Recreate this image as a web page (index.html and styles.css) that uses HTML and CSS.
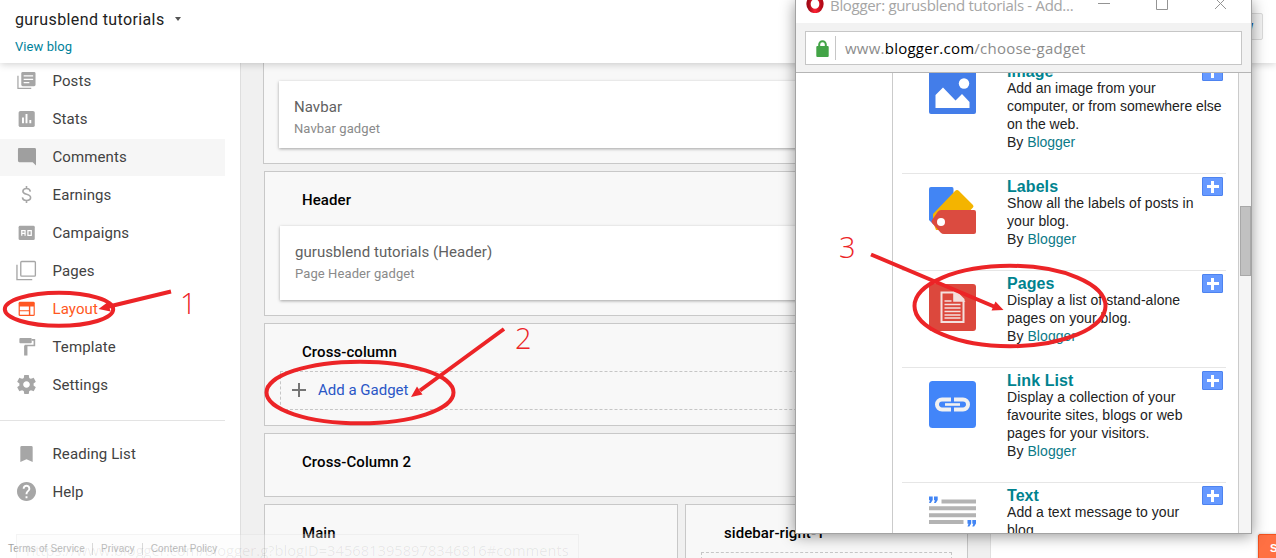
FILE: index.html
```html
<!DOCTYPE html>
<html lang="en">
<head>
<meta charset="utf-8">
<title>Blogger: Layout</title>
<link rel="stylesheet" href="styles.css">
</head>
<body>
<div class="page">
  <header class="topbar">
    <div class="blog-name"><span class="t-blog">gurusblend tutorials</span><i class="caret"></i></div>
    <a class="view-blog">View blog</a>
    <div class="preview-btn">Preview</div>
  </header>

  <div class="body">
    <nav class="sidebar">
      <ul class="menu">
        <li><svg viewBox="0 0 20 20"><path d="M1 5v13.2h14" fill="none" stroke="#a6a6a6" stroke-width="1.3"/><rect x="4.5" y="1" width="15" height="15" rx="1.5" fill="#a6a6a6"/><path d="M7 5.2h10M7 8.7h10M7 12.2h6" stroke="#fff" stroke-width="1.3"/></svg><span>Posts</span></li>
        <li><svg viewBox="0 0 20 20"><rect x="1.7" y="2" width="17" height="17" rx="2" fill="#a6a6a6"/><path d="M6.3 9v6M10 5.3V15M14 11.500v3.500" stroke="#fff" stroke-width="2"/></svg><span>Stats</span></li>
        <li class="hover"><svg viewBox="0 0 20 20"><path d="M2 1h16.500q1.500 0 1.500 1.500V19.500L16.500 16H2.500Q1 16 1 14.500V2.500Q1 1 2 1z" fill="#9f9f9f"/></svg><span>Comments</span></li>
        <li><svg viewBox="0 0 20 20"><path d="M10 1v2.500M10 16.500V19M14 7q-.4-3.300-4-3.300T6.200 6.600q0 2.300 3.900 3.200 4.200 1 4.200 3.700t-4.200 2.800q-4 0-4.400-3.300" fill="none" stroke="#a6a6a6" stroke-width="1.700"/></svg><span>Earnings</span></li>
        <li><svg viewBox="0 0 20 20"><rect x="1.700" y="3" width="17" height="15" rx="1.500" fill="#a6a6a6"/><path d="M5 13.500V8h3.500v5.500M5 11h3.500M11.500 8h3.500v5h-3.500z" fill="none" stroke="#fff" stroke-width="1.300"/></svg><span>Campaigns</span></li>
        <li><svg class="wide" viewBox="0 0 22 22"><path d="M1 5v15.500h16" fill="none" stroke="#a6a6a6" stroke-width="1.400"/><rect x="5" y="1.600" width="15.300" height="15.300" rx="1" fill="none" stroke="#a6a6a6" stroke-width="1.400"/></svg><span>Pages</span></li>
        <li class="active"><svg viewBox="0 0 20 20"><rect x="1.700" y="3" width="17" height="15" rx="1.500" fill="#ff5722"/><path d="M3 8h9.500v3.800H3zM3 13h9.500v3.700H3zM14 8h3.500v8.700H14z" fill="#fff"/></svg><span>Layout</span></li>
        <li><svg viewBox="0 0 20 20"><rect x="2.500" y="1" width="13" height="5.500" rx="1" fill="#a6a6a6"/><path d="M15.500 3H18.300V9H9v3" fill="none" stroke="#a6a6a6" stroke-width="1.700"/><rect x="7.500" y="9" width="3.500" height="10.500" fill="#a6a6a6"/></svg><span>Template</span></li>
        <li><svg viewBox="2 2 20 20"><path fill="#a6a6a6" d="M19.430 12.980c.04-.32.07-.64.07-.98s-.03-.66-.07-.98l2.110-1.650c.19-.15.24-.42.12-.64l-2-3.460c-.12-.22-.39-.3-.61-.22l-2.490 1c-.52-.4-1.080-.73-1.690-.98l-.38-2.650C14.460 2.180 14.250 2 14 2h-4c-.25 0-.46.18-.49.42l-.38 2.650c-.61.25-1.170.59-1.690.98l-2.490-1c-.23-.09-.49 0-.61.22l-2 3.460c-.13.22-.07.49.12.64l2.110 1.650c-.04.32-.07.65-.07.98s.03.66.07.98l-2.110 1.650c-.19.15-.24.42-.12.64l2 3.460c.12.22.39.3.61.22l2.490-1c.52.4 1.080.73 1.690.98l.38 2.650c.03.24.24.42.49.42h4c.25 0 .46-.18.49-.42l.38-2.650c.61-.25 1.170-.59 1.690-.98l2.490 1c.23.09.49 0 .61-.22l2-3.460c.12-.22.07-.49-.12-.64l-2.110-1.650zM12 15.500c-1.930 0-3.500-1.570-3.500-3.500s1.570-3.500 3.500-3.500 3.500 1.570 3.500 3.500-1.570 3.500-3.500 3.500z"/></svg><span>Settings</span></li>
      </ul>
      <ul class="menu second">
        <li><svg viewBox="0 0 20 20"><path d="M5 2h10q1.500 0 1.500 1.500V19L10 16l-6.500 3V3.500Q3.500 2 5 2z" fill="#a6a6a6"/></svg><span>Reading List</span></li>
        <li><svg viewBox="2 2 20 20"><path fill="#a6a6a6" d="M12 2C6.480 2 2 6.480 2 12s4.480 10 10 10 10-4.480 10-10S17.520 2 12 2zm1 17h-2v-2h2v2zm2.070-7.750l-.9.920C13.450 12.900 13 13.500 13 15h-2v-.5c0-1.100.45-2.100 1.170-2.830l1.240-1.260c.37-.36.59-.86.59-1.410 0-1.100-.9-2-2-2s-2 .9-2 2H8c0-2.210 1.790-4 4-4s4 1.790 4 4c0 .88-.36 1.680-.93 2.250z"/></svg><span>Help</span></li>
      </ul>
      <div class="legal"><span>Terms of Service</span><span>Privacy</span><span>Content Policy</span></div>
    </nav>

    <main class="canvas">
      <section class="section navbar-sec">
        <div class="card"><div class="card-title">Navbar</div><div class="card-sub">Navbar gadget</div></div>
      </section>
      <section class="section header-sec">
        <h3>Header</h3>
        <div class="card"><div class="card-title">gurusblend tutorials (Header)</div><div class="card-sub">Page Header gadget</div></div>
      </section>
      <section class="section cross-sec">
        <h3>Cross-column</h3>
        <div class="add"><svg viewBox="0 0 14 14"><path d="M7 0v14M0 7h14" stroke="#757575" stroke-width="2"/></svg><span>Add a Gadget</span></div>
      </section>
      <section class="section cross2-sec"><h3>Cross-Column 2</h3></section>
      <div class="columns">
        <section class="section main-sec"><h3>Main</h3></section>
        <section class="section right-sec"><h3>sidebar-right-1</h3><div class="add"></div></section>
      </div>
    </main>
  </div>
</div>

<div class="status">https://www.blogger.com/blogger.g?blogID=3456813958978346816#comments</div>
<div class="save-btn">Save</div>

<div class="window">
  <div class="titlebar">
    <svg class="opera" viewBox="0 0 18 18"><defs><linearGradient id="og" x2="1"><stop stop-color="#a30a17"/><stop offset=".5" stop-color="#ff2335"/><stop offset="1" stop-color="#b50a18"/></linearGradient></defs><ellipse cx="9" cy="9" rx="6.500" ry="7" fill="none" stroke="url(#og)" stroke-width="4.300"/></svg>
    <span class="win-title">Blogger: gurusblend tutorials - Add...</span>
    <svg class="controls" viewBox="0 0 132 14"><path d="M0 6.500h12M58.500.5h11v12h-11zM117 1l11 11M128 1l-11 11" fill="none" stroke="#949494"/></svg>
  </div>
  <div class="address">
    <div class="url-box">
      <svg class="lock" viewBox="0 0 13 17"><path d="M3.200 8V4.500a3.300 3.300 0 0 1 6.600 0V8" fill="none" stroke="#43a447" stroke-width="2"/><rect x=".3" y="6" width="12.400" height="11" rx="1" fill="#43a447"/></svg>
      <span class="url">www.<b>blogger.com</b>/choose-gadget</span>
    </div>
  </div>
  <div class="win-body">
    <div class="gadgets">
      <article class="gadget">
        <svg viewBox="0 0 47 47"><rect width="47" height="47" rx="2" fill="#437de9"/><circle cx="35" cy="16.500" r="5.200" fill="#fff"/><path d="M6.500 41V28L14 20.500 26.500 33.500 33 27l7.500 8v6z" fill="#fff"/></svg>
        <div class="info"><h4>Image</h4><p>Add an image from your<br>computer, or from somewhere else<br>on the web.<br>By <a>Blogger</a></p></div>
        <span class="plus"></span>
      </article>
      <article class="gadget">
        <svg viewBox="0 0 47 47"><path d="M0 2Q0 0 2 0h21q1.500 0 1.500 2v20L5 38 0 33z" fill="#4285f4"/><path d="M4 27 26 4q2-2 4 0L44 18q1 1.500 0 2.500L22 43H7L4 35z" fill="#f4b400"/><path d="M12 23h33q2 0 2 2v20q0 2-2 2H15q-2 0-3.500-1.500L3 36q-1-1.500 0-3l6-8.500Q10 23 12 23z" fill="#db4b40"/><circle cx="12" cy="35" r="4" fill="#fff"/></svg>
        <div class="info"><h4>Labels</h4><p>Show all the labels of posts in<br>your blog.<br>By <a>Blogger</a></p></div>
        <span class="plus"></span>
      </article>
      <article class="gadget">
        <svg viewBox="0 0 47 47"><rect width="47" height="47" rx="3" fill="#dc483d"/><path d="M12.500 8.500h15l7 7v22.500h-22z" fill="none" stroke="#f4e0de" stroke-width="2"/><path d="M25 8v9h9.500zM15.500 17h7M15.500 20.500h16M15.500 24h16M15.500 27.500h16M15.500 31h16M15.500 34h16" fill="#f4e0de" stroke="#f4e0de" stroke-width="1.600"/></svg>
        <div class="info"><h4>Pages</h4><p>Display a list of stand-alone<br>pages on your blog.<br>By <a>Blogger</a></p></div>
        <span class="plus"></span>
      </article>
      <article class="gadget">
        <svg viewBox="0 0 47 47"><rect width="47" height="47" rx="3.500" fill="#4285f9"/><path d="M22 18.500H13a5 5 0 0 0 0 10h9M25 18.500h9a5 5 0 0 1 0 10h-9" fill="none" stroke="#f1f1f1" stroke-width="4"/><path d="M16 23.500h15" stroke="#f1f1f1" stroke-width="2.600"/></svg>
        <div class="info"><h4>Link List</h4><p>Display a collection of your<br>favourite sites, blogs or web<br>pages for your visitors.<br>By <a>Blogger</a></p></div>
        <span class="plus"></span>
      </article>
      <article class="gadget">
        <svg viewBox="0 0 47 47"><path d="M12.500 5.500H47M0 12.300h47M0 19.200h47M0 26h34.500" stroke="#b3b3b3" stroke-width="4"/><path d="M0 .5h3.700v3.500L1.800 7H0l1-2.700H0zM5 .5h3.700v3.500L6.800 7H5l1-2.700H5zM38.500 24h3.700v3.500l-1.900 3h-1.800l1-2.700h-1zM43.300 24H47v3.500l-1.900 3h-1.800l1-2.700h-1z" fill="#4285f4"/></svg>
        <div class="info"><h4>Text</h4><p>Add a text message to your<br>blog.</p></div>
        <span class="plus"></span>
      </article>
    </div>
    <div class="scrollbar"><div class="thumb"></div></div>
  </div>
</div>

<svg class="notes" viewBox="0 0 1276 558">
  <g fill="none" stroke="#ec2427" stroke-width="4">
    <ellipse cx="59" cy="309.300" rx="54.200" ry="16.500"/>
    <ellipse cx="360" cy="392.500" rx="93.500" ry="30.800"/>
    <ellipse cx="1010" cy="306" rx="95.500" ry="40.200"/>
    <path d="M171 291.500 107 307M504 329l-84 61.500M871 254.500 994 306.500"/>
  </g>
  <path d="M98.500 309l9.500-7 2.500 9.500zM411 397l6-10.500 5.500 8zM1003.500 310l-8-8.500-4 9z" fill="#ec2427"/>
  <g class="digits"><text x="180" y="314">1</text><text x="515" y="349">2</text><text x="839" y="258">3</text></g>
</svg>
</body>
</html>
```
FILE: styles.css
```css
* { box-sizing: border-box; }
body { margin: 0; width: 1276px; height: 558px; overflow: hidden; position: relative; background: #fff; font-family: Roboto, sans-serif; }
ul, h3, h4, p { margin: 0; padding: 0; list-style: none; }
svg { display: block; flex: none; }

.page { height: 558px; display: flex; flex-direction: column; }
.topbar { position: relative; z-index: 2; height: 63px; flex: none; padding: 9px 0 0 15px; background: #fff; box-shadow: 0 1px 8px rgba(0,0,0,.2); clip-path: inset(0 0 -12px 0); }
.blog-name { display: flex; align-items: center; gap: 10px; height: 20px; font-size: 16px; color: #212121; letter-spacing: .38px; }
.caret { border: 3.5px solid transparent; border-top: 4px solid #555; border-bottom: 0; }
.view-blog { display: block; margin-top: 9px; font-size: 13px; line-height: 18px; color: #00829b; letter-spacing: .08px; }
.preview-btn { position: absolute; left: 1190px; top: 13px; width: 73px; height: 27px; padding-right: 9px; text-align: right; border: 1px solid #dcdcdc; border-radius: 2px; background: #f5f5f5; color: #1155a5; font: bold 12px/25px "Liberation Sans", sans-serif; }

.body { flex: 1; display: flex; min-height: 0; overflow: hidden; }
.sidebar { width: 241px; flex: none; background: #fff; border-right: 1px solid #dedede; }
.menu { width: 225px; height: 358px; display: flex; flex-direction: column; gap: 1px; border-bottom: 1px solid #e3e3e3; }
.menu li { flex: none; display: flex; align-items: center; height: 37px; padding: 0 0 2px 17px; gap: 16.5px; font-size: 15px; color: #424242; letter-spacing: .1px; }
.menu svg { width: 19px; height: 19px; }
.menu svg.wide { width: 21px; height: 21px; margin: 0 -1px; }
.menu .hover { background: #f6f6f6; }
.menu .active { color: #ff5722; }
.menu.second { height: 108px; padding-top: 15px; border: 0; }
.legal { display: flex; margin-top: 14px; padding-left: 8px; font: 10px/12px "Liberation Sans", sans-serif; color: #a2a2a2; letter-spacing: .15px; }
.legal span + span { margin-left: 7px; padding-left: 8px; border-left: 1px solid #ccc; }

.canvas { width: 750px; flex: none; padding: 0 22px 0 23px; display: flex; flex-direction: column; gap: 7px; background: #f0f0f0; border-right: 1px solid #e0e0e0; }
.section { flex: none; border: 1px solid #c8c8c8; background: #f8f8f8; padding: 0 15px; color: #616161; }
.section h3 { padding: 18px 0 0 22px; height: 54px; font-size: 15px; line-height: 20px; font-weight: 500; color: #000; letter-spacing: .08px; }
.card { background: #fff; box-shadow: 0 1px 3px rgba(0,0,0,.35); padding: 16px 15px 0; height: 74px; }
.card-title { font-size: 15px; line-height: 20px; letter-spacing: .06px; }
.card-sub { font-size: 13px; line-height: 18px; margin-top: 3px; color: #8a8a8a; letter-spacing: .1px; }
.navbar-sec { height: 101px; margin-left: -1px; padding-top: 18px; border-top: 0; }
.navbar-sec .card { height: 67px; }
.header-sec { height: 145px; }
.cross-sec { height: 103px; }
.cross-sec h3 { height: 47px; }
.add { height: 39px; border: 1px dashed #c6c6c6; padding: 0 0 1px 11px; display: flex; align-items: center; gap: 12px; font-size: 15px; color: #2a56c6; }
.add svg { width: 14px; height: 14px; }
.cross2-sec { height: 64px; }
.columns { display: flex; gap: 7px; }
.columns .section { height: 101px; }
.main-sec { width: 414px; }
.right-sec { flex: 1; }
.right-sec h3 { height: 47px; padding-left: 23px; }

.status { position: absolute; left: 16px; top: 534px; width: 563px; height: 26px; padding-left: 9px; border: 1px solid rgba(0,0,0,.035); background: rgba(250,250,250,.3); color: rgba(0,0,0,.075); font: 14.7px/31px "Open Sans", sans-serif; white-space: nowrap; }
.save-btn { position: absolute; left: 1258px; top: 534px; width: 60px; height: 30px; padding-left: 11px; border: 1px solid #f4511e; border-radius: 2px; background: #ff7043; color: #fff; font: bold 11px/27px "Liberation Sans", sans-serif; box-shadow: 0 0 3px rgba(0,0,0,.3); }

.window { position: absolute; left: 795px; top: 0; width: 457px; height: 534px; display: flex; flex-direction: column; border: 1px solid #a3a3a3; border-top: 0; background: #fff; box-shadow: 0 2px 14px rgba(0,0,0,.42); z-index: 3; }
.titlebar { height: 23px; flex: none; display: flex; align-items: flex-start; padding-left: 10px; overflow: hidden; }
.opera { width: 18px; height: 18px; margin-top: -5px; }
.win-title { width: 252px; margin: -5px 0 0 6px; font: 15px/20px "Open Sans", sans-serif; letter-spacing: -.31px; color: #a5a5a5; white-space: nowrap; }
.controls { width: 132px; height: 14px; margin: -3px 0 0 16px; }
.address { height: 50px; flex: none; padding: 8px 9px; background: #f2f2f2; border-bottom: 1px solid #b5b5b5; }
.url-box { height: 34px; display: flex; align-items: center; padding-left: 10px; border: 1px solid #c6c6c6; background: #fff; }
.lock { width: 13px; height: 17px; margin-right: 6px; }
.url { border-left: 1px solid #c6c6c6; padding-left: 9px; font: 15px/24px "Open Sans", sans-serif; letter-spacing: .24px; color: #8c8c8c; }
.url b { font-weight: 400; color: #000; }
.win-body { flex: 1; min-height: 0; display: flex; padding-left: 96px; overflow: hidden; }
.gadgets { width: 347px; flex: none; padding: 0 12px 0 9px; border: 1px solid #cbcbcb; border-width: 0 1px; }
.gadget { display: flex; padding-bottom: 22px; border-top: 1px solid #e6e6e6; }
.gadget:first-child { margin-top: -15px; }
.gadget > svg { width: 47px; height: 47px; margin: 13px 31px 0 27px; }
.gadget:first-child > svg { margin-top: 8px; }
.info { width: 195px; padding-top: 3px; font: 14px/18px "Liberation Sans", sans-serif; color: #222; white-space: nowrap; letter-spacing: .07px; }
.gadget:first-child p { letter-spacing: -.03px; }
.info h4 { font-size: 16px; line-height: 20px; height: 17px; color: #00838f; }
.info a { color: #0b7a88; }
.plus { width: 21px; height: 19px; margin-top: 3px; border: 1px solid #4d83f0; background: linear-gradient(#fff,#fff) center/12px 3px no-repeat, linear-gradient(#fff,#fff) center/3px 12px no-repeat, #6699ff; border-radius: 1px; }
.scrollbar { flex: 1; background: #f5f5f5; padding: 133px 0 0 1px; }
.thumb { height: 70px; background: #c1c1c1; border: 1px solid #a8a8a8; }

.notes { position: absolute; left: 0; top: 0; width: 1276px; height: 558px; z-index: 4; }
.digits { font: 350 29px "Open Sans", sans-serif; fill: #ec2427; }
```
